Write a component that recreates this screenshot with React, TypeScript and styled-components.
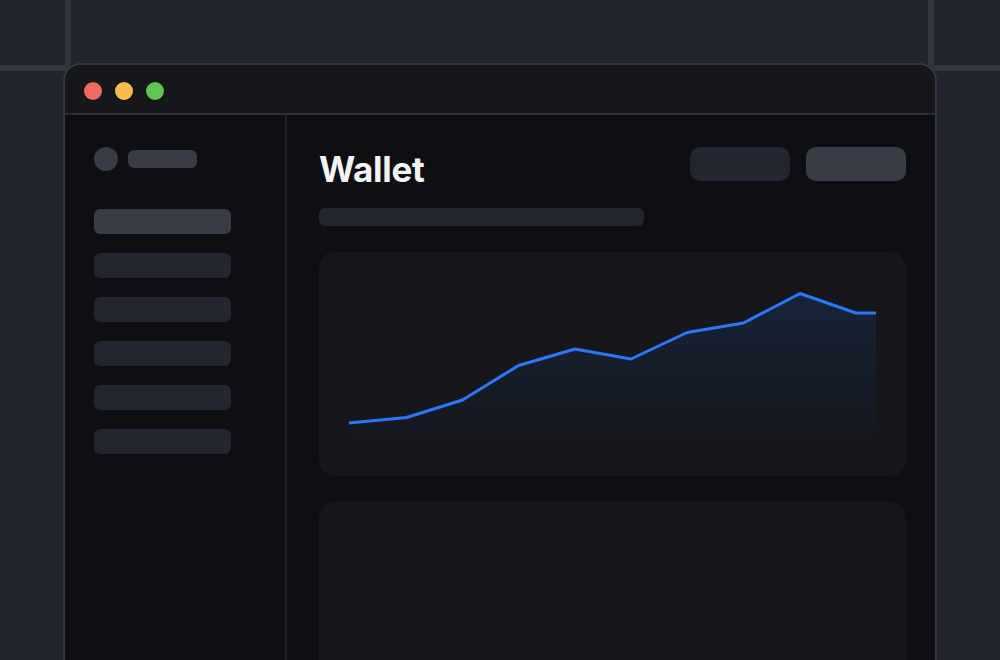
import React from "react";
import styled, { createGlobalStyle } from "styled-components";

const GlobalStyle = createGlobalStyle`
  html, body {
    margin: 0;
    padding: 0;
    background: #22252d;
    font-family: Inter, "Noto Sans", "Liberation Sans", sans-serif;
  }
  * { box-sizing: border-box; }
`;

const Stage = styled.div`
  width: 1000px;
  height: 660px;
  overflow: hidden;
  background-color: #22252d;
  background-image:
    linear-gradient(to right, transparent 65px, #33363e 65px, #33363e 71px, transparent 71px),
    linear-gradient(to right, transparent 928px, #33363e 928px, #33363e 934px, transparent 934px),
    linear-gradient(to bottom, transparent 65px, #33363e 65px, #33363e 71px, transparent 71px);
  padding: 63px 0 0 63px;
`;

const Window = styled.div`
  width: 874px;
  height: 640px;
  border: 2px solid #34373f;
  border-bottom: none;
  border-radius: 18px 18px 0 0;
  background: #0e0f12;
  overflow: hidden;
  display: flex;
  flex-direction: column;
`;

const TitleBar = styled.div`
  height: 50px;
  flex: none;
  background: #15171b;
  border-bottom: 2px solid #2c2f36;
  display: flex;
  align-items: center;
  gap: 13px;
  padding: 3px 0 0 19px;
`;

const Dot = styled.span<{ $color: string }>`
  width: 18px;
  height: 18px;
  border-radius: 50%;
  background: ${(p) => p.$color};
`;

const Body = styled.div`
  flex: 1;
  display: flex;
`;

const Sidebar = styled.aside`
  width: 222px;
  flex: none;
  border-right: 2px solid #1f2127;
  padding: 32px 0 0 29px;
  display: flex;
  flex-direction: column;
`;

const Brand = styled.div`
  display: flex;
  align-items: center;
  gap: 10px;
  margin-bottom: 38px;
`;

const Avatar = styled.div`
  width: 24px;
  height: 24px;
  border-radius: 50%;
  background: #393c44;
`;

const BrandLabel = styled.div`
  width: 69px;
  height: 18px;
  border-radius: 6px;
  background: #393c44;
`;

const Nav = styled.nav`
  display: flex;
  flex-direction: column;
  gap: 19px;
`;

const NavItem = styled.div<{ $active?: boolean }>`
  width: 137px;
  height: 25px;
  border-radius: 6px;
  background: ${(p) => (p.$active ? "#393c44" : "#22262e")};
`;

const Main = styled.main`
  flex: 1;
  padding: 32px 29px 0 32px;
  display: flex;
  flex-direction: column;
`;

const Header = styled.div`
  height: 34px;
  display: flex;
  align-items: center;
  justify-content: space-between;
`;

const Title = styled.h1`
  margin: 0;
  font-size: 35px;
  line-height: 34px;
  font-weight: 700;
  color: #f4f4f5;
  letter-spacing: -0.3px;
  transform: translateY(5px);
`;

const Actions = styled.div`
  display: flex;
  gap: 16px;
`;

const ActionButton = styled.div<{ $strong?: boolean }>`
  width: 100px;
  height: 34px;
  border-radius: 10px;
  background: ${(p) => (p.$strong ? "#393c44" : "#22262e")};
`;

const Subtitle = styled.div`
  width: 325px;
  height: 18px;
  border-radius: 6px;
  background: #23262f;
  margin-top: 27px;
`;

const Card = styled.section<{ $height: number }>`
  width: 587px;
  height: ${(p) => p.$height}px;
  flex: none;
  border-radius: 16px;
  background: #15171b;
  margin-top: 26px;
  overflow: hidden;
`;

const ChartSvg = styled.svg`
  display: block;
`;

const points: [number, number][] = [
  [30, 171],
  [87.5, 165.5],
  [143.5, 148],
  [199.5, 113.5],
  [256, 97],
  [312, 107],
  [368, 80.5],
  [424.5, 71],
  [481, 41.5],
  [537, 61],
  [557, 61],
];

const linePath = points.map(([x, y], i) => `${i ? "L" : "M"}${x} ${y}`).join(" ");
const areaPath = `${linePath} L557 194 L30 194 Z`;

export default function App() {
  return (
    <>
      <GlobalStyle />
      <Stage>
        <Window>
          <TitleBar>
            <Dot $color="#ef6a5f" />
            <Dot $color="#f5be4f" />
            <Dot $color="#5fc553" />
          </TitleBar>
          <Body>
            <Sidebar>
              <Brand>
                <Avatar />
                <BrandLabel />
              </Brand>
              <Nav>
                <NavItem $active />
                <NavItem />
                <NavItem />
                <NavItem />
                <NavItem />
                <NavItem />
              </Nav>
            </Sidebar>
            <Main>
              <Header>
                <Title>Wallet</Title>
                <Actions>
                  <ActionButton />
                  <ActionButton $strong />
                </Actions>
              </Header>
              <Subtitle />
              <Card $height={224}>
                <ChartSvg width="587" height="224" viewBox="0 0 587 224">
                  <defs>
                    <linearGradient id="area" x1="0" y1="41" x2="0" y2="194" gradientUnits="userSpaceOnUse">
                      <stop offset="0" stopColor="#2b78ff" stopOpacity="0.13" />
                      <stop offset="1" stopColor="#2b78ff" stopOpacity="0" />
                    </linearGradient>
                  </defs>
                  <path d={areaPath} fill="url(#area)" />
                  <path d={linePath} fill="none" stroke="#2b78ff" strokeWidth="3" strokeLinejoin="round" />
                </ChartSvg>
              </Card>
              <Card $height={200} />
            </Main>
          </Body>
        </Window>
      </Stage>
    </>
  );
}
